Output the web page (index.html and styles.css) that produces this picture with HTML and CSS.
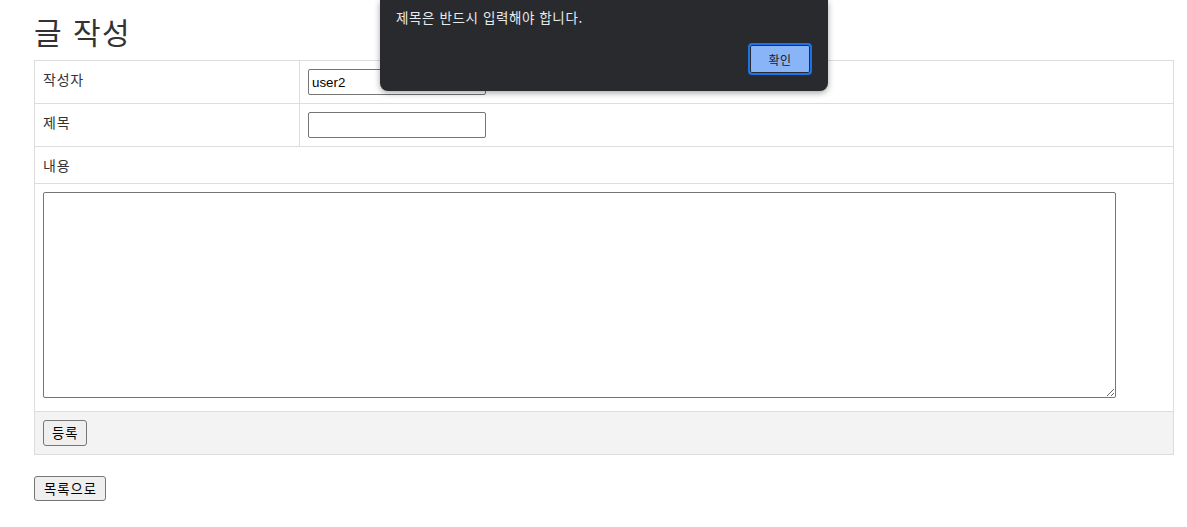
FILE: index.html
```html
<!DOCTYPE html>
<html lang="ko">
<head>
    <meta charset="UTF-8">
    <title>글 작성</title>
    <link rel="stylesheet" href="styles.css">
</head>
<body>
    <div class="container">
        <h2 class="page-title">글 작성</h2>
        <form class="write-form">
            <table class="write-table">
                <tr>
                    <th>작성자</th>
                    <td><input type="text" class="field" value="user2"></td>
                </tr>
                <tr>
                    <th>제목</th>
                    <td><input type="text" class="field"></td>
                </tr>
                <tr>
                    <th colspan="2">내용</th>
                </tr>
                <tr>
                    <td colspan="2" class="content-cell"><textarea class="content"></textarea></td>
                </tr>
                <tr class="footer-row">
                    <td colspan="2"><button type="button" class="btn">등록</button></td>
                </tr>
            </table>
        </form>
        <button type="button" class="btn btn-list">목록으로</button>
    </div>

    <div class="alert-dialog">
        <p class="alert-msg">제목은 반드시 입력해야 합니다.</p>
        <div class="alert-actions">
            <button type="button" class="alert-ok">확인</button>
        </div>
    </div>
</body>
</html>
```

FILE: styles.css
```css
body {
    margin: 0;
    font-family: "Noto Sans CJK KR", "Liberation Sans", sans-serif;
    font-size: 14px;
    color: #333;
    background-color: #fff;
}

.container {
    width: 1140px;
    margin-left: 34px;
}

.page-title {
    margin: 10px 0 8px;
    font-size: 30px;
    font-weight: normal;
    line-height: 42px;
    letter-spacing: 1.5px;
    color: #333;
}

.write-table {
    width: 100%;
    border-collapse: collapse;
    border: 1px solid #ddd;
}

.write-table th,
.write-table td {
    border: 1px solid #ddd;
    padding: 8px;
    text-align: left;
    vertical-align: top;
    font-weight: normal;
    line-height: 20px;
}

.write-table th {
    width: 248px;
    letter-spacing: 0.8px;
}

.field {
    width: 178px;
    height: 26px;
    box-sizing: border-box;
    margin: 0;
    padding: 1px 3px;
    border: 1px solid #767676;
    border-radius: 2px;
    font-family: "Liberation Sans", Arial, sans-serif;
    font-size: 13.33px;
    color: #000;
}

.write-table .content-cell {
    padding-bottom: 9px;
}

.content {
    width: 1073px;
    height: 206px;
    box-sizing: border-box;
    margin: 0;
    border: 1px solid #767676;
    border-radius: 2px;
    vertical-align: baseline;
}

.footer-row td {
    background-color: #f3f3f3;
}

.btn {
    height: 26px;
    margin: 0;
    padding: 0 7px 0 8px;
    border: 1px solid #767676;
    border-radius: 3px;
    background-color: #efefef;
    font-family: "Noto Sans CJK KR", sans-serif;
    font-size: 13.33px;
    letter-spacing: 1px;
    color: #000;
    line-height: 20px;
}

.btn-list {
    margin-top: 21px;
    height: 25px;
    padding: 0 8px 0 9px;
}

.alert-dialog {
    position: absolute;
    top: 0;
    left: 380px;
    width: 448px;
    height: 91px;
    box-sizing: border-box;
    padding: 8px 16px 16px;
    background-color: #292a2d;
    border-radius: 0 0 8px 8px;
    box-shadow: 0 2px 6px rgba(0, 0, 0, 0.35);
    color: #e8eaed;
}

.alert-msg {
    margin: 0;
    font-size: 13.5px;
    line-height: 18px;
    letter-spacing: 0.6px;
}

.alert-actions {
    display: flex;
    justify-content: flex-end;
    margin-top: 17px;
}

.alert-ok {
    width: 64px;
    height: 32px;
    padding: 0;
    border: 2px solid #1a73e8;
    border-radius: 4px;
    background-color: #8ab4f8;
    box-shadow: inset 0 0 0 1px #292a2d;
    font-family: "Noto Sans CJK KR", sans-serif;
    font-size: 12px;
    letter-spacing: 0.5px;
    color: #202124;
}
```
